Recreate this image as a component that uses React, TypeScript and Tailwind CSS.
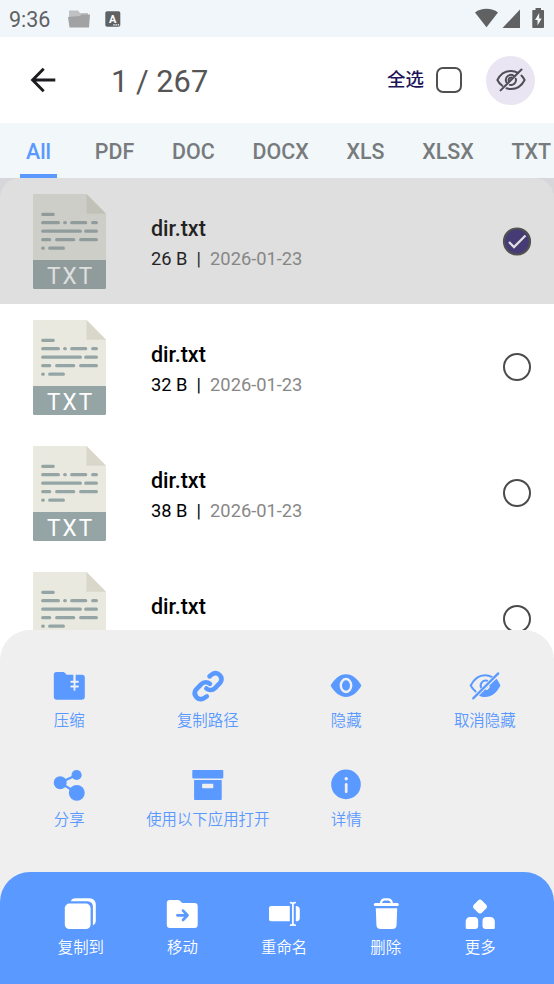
import React from 'react';

interface IconProps {
  className?: string;
}

interface Action {
  label: string;
  icon: React.ReactNode;
}

interface FileEntry {
  name: string;
  size: string;
  date: string;
  selected?: boolean;
}

const tabs = ['All', 'PDF', 'DOC', 'DOCX', 'XLS', 'XLSX', 'TXT'];

const files: FileEntry[] = [
  { name: 'dir.txt', size: '26 B', date: '2026-01-23', selected: true },
  { name: 'dir.txt', size: '32 B', date: '2026-01-23' },
  { name: 'dir.txt', size: '38 B', date: '2026-01-23' },
  { name: 'dir.txt', size: '37 B', date: '2026-01-23' },
];

function Icon({ children }: { children: React.ReactNode }) {
  return (
    <svg className="h-8 w-8 shrink-0 overflow-visible" viewBox="0 0 32 32" fill="currentColor" aria-hidden="true">
      {children}
    </svg>
  );
}

const sheetActions: Action[] = [
  {
    label: '压缩',
    icon: (
      <Icon>
        <path d="M3.6 2H9.5c1.2 0 2 .4 2.8 1.2l1.4 1.6H20.600V13h1.800V4.800H29a2.800 2.800 0 0 1 2.800 2.800v19a3.200 3.200 0 0 1-3.200 3.200H4A3.200 3.200 0 0 1 .8 26.600V4.800A2.800 2.800 0 0 1 3.600 2z" />
        <path d="M21.500 3v17.600" fill="none" stroke="#f0f0f0" strokeWidth="1.800" />
        <path d="M18.300 11.700h6.600M18.300 16.600h6.600" fill="none" stroke="#f0f0f0" strokeWidth="2" strokeLinecap="round" />
      </Icon>
    ),
  },
  {
    label: '复制路径',
    icon: (
      <Icon>
        <g fill="none" stroke="currentColor" strokeWidth="4.600" strokeLinecap="round" strokeLinejoin="round">
          <path d="M17.500 6.300 20.500 4a6 6 0 0 1 8 8.400l-5.500 5.700c-2.500 2.500-6.200 2.300-8.600.3" />
          <path d="M14.800 26.300 11.600 28.400a6 6 0 0 1-7.800-8.600l5.500-5.700c2.500-2.500 6.200-2.300 8.600-.3" />
        </g>
      </Icon>
    ),
  },
  {
    label: '隐藏',
    icon: (
      <Icon>
        <path d="M.6 15.600C4.200 9 9.600 4.200 16 4.200S27.800 9 31.400 15.600C27.800 22.200 22.400 27 16 27S4.200 22.200.6 15.600z" />
        <ellipse cx="16" cy="15.500" rx="5.200" ry="6.500" fill="none" stroke="#f0f0f0" strokeWidth="2.400" />
      </Icon>
    ),
  },
  {
    label: '取消隐藏',
    icon: (
      <Icon>
        <path d="M31.400 15.500C28 22.500 22.400 27 16 27c-2.200 0-4.200-.5-6-1.500L27.400 8.700c1.600 1.700 3 4.400 4 6.800z" />
        <path d="M6.600 21.600C4.700 20 3 17.900 1.700 15.500 5 9 10 5.200 16 5.200c2.600 0 5 .7 7.100 2M12.200 17.800a5 5 0 0 1 6-7" fill="none" stroke="currentColor" strokeWidth="2" strokeLinecap="round" />
        <path d="M16.800 19.400c1.800-.3 3-1.600 3.300-3.500" fill="none" stroke="#f0f0f0" strokeWidth="1.600" />
        <path d="M3.600 27.800 28.700 2.600" fill="none" stroke="#f0f0f0" strokeWidth="1.400" />
        <path d="M4.200 28.400 29.200 3.400" fill="none" stroke="currentColor" strokeWidth="2.200" strokeLinecap="round" />
      </Icon>
    ),
  },
  {
    label: '分享',
    icon: (
      <Icon>
        <path d="M23.500 6 7.100 13.700 23.800 24" fill="none" stroke="currentColor" strokeWidth="2.200" />
        <circle cx="7.200" cy="13.700" r="6.500" />
        <circle cx="23.600" cy="6" r="5.100" />
        <circle cx="23.800" cy="23.900" r="7.900" />
      </Icon>
    ),
  },
  {
    label: '使用以下应用打开',
    icon: (
      <Icon>
        <rect x=".3" y="1" width="31" height="8.400" rx=".8" />
        <path fillRule="evenodd" d="M2.100 11H29.700v19.200a.8.800 0 0 1-.8.800h-26a.8.800 0 0 1-.8-.8zM10.900 14.700a.8.800 0 0 0-.8.800v3a.8.800 0 0 0 .8.800h9.600a.8.800 0 0 0 .8-.8v-3a.8.800 0 0 0-.8-.8z" />
      </Icon>
    ),
  },
  {
    label: '详情',
    icon: (
      <Icon>
        <circle cx="16" cy="15.400" r="14.800" />
        <circle cx="16.200" cy="9.700" r="1.700" fill="#f0f0f0" />
        <path d="M16.200 15.300v7.500" fill="none" stroke="#f0f0f0" strokeWidth="2.700" strokeLinecap="round" />
      </Icon>
    ),
  },
];

const barActions: Action[] = [
  {
    label: '复制到',
    icon: (
      <Icon>
        <g transform="translate(-1.200 0)">
          <rect x="1" y="5.600" width="25.800" height="25.400" rx="4.600" />
          <path d="M7 3.200C7.800 1.200 9.200.2 11.500.2H26a6 6 0 0 1 6 6v16.600c0 2-1 3.800-2.900 4.400V8.400a5.200 5.200 0 0 0-5.200-5.200z" />
        </g>
      </Icon>
    ),
  },
  {
    label: '移动',
    icon: (
      <Icon>
        <g transform="translate(-1 0)">
          <path d="M4 2h7.500c1.200 0 2.200.4 3 1.200l1.300 1.200c.5.4 1 .6 1.600.6H28.500a3.200 3.200 0 0 1 3.200 3.200v18.500a3.200 3.200 0 0 1-3.200 3.200H4a3.200 3.200 0 0 1-3.200-3.200V5.200A3.200 3.200 0 0 1 4 2z" />
          <path d="M11.400 17.300H21M17 12.600l4.500 4.700-4.500 4.700" fill="none" stroke="#5a99ff" strokeWidth="2.700" strokeLinecap="round" strokeLinejoin="round" />
        </g>
      </Icon>
    ),
  },
  {
    label: '重命名',
    icon: (
      <Icon>
        <path d="M3 8h18.800v15.300H3a2 2 0 0 1-2-2V10a2 2 0 0 1 2-2zM27.800 8c2.600 0 4 1.300 4 3.400v8.500c0 2.100-1.400 3.400-4 3.400z" />
        <path d="M22.600 4.600c1.500 0 2.300.6 2.300 1.700 0-1.100.8-1.700 2.300-1.700M22.600 27.200c1.500 0 2.300-.6 2.300-1.700 0 1.100.8 1.700 2.300 1.700M24.900 6v20" fill="none" stroke="currentColor" strokeWidth="1.700" strokeLinecap="round" />
      </Icon>
    ),
  },
  {
    label: '删除',
    icon: (
      <Icon>
        <path d="M10.800 6C11 3 12.600 1.300 15 1.300h2.800c2.400 0 4 1.700 4.200 4.700" fill="none" stroke="currentColor" strokeWidth="2.200" />
        <rect x="3.800" y="4.900" width="25" height="3" rx="1.500" />
        <path d="M5.800 10.200h21.400l-.6 16.500a4.400 4.400 0 0 1-4.400 4.300H10.800a4.400 4.400 0 0 1-4.400-4.300z" />
      </Icon>
    ),
  },
  {
    label: '更多',
    icon: (
      <Icon>
        <rect x="10.300" y="2.900" width="11.400" height="11.400" rx="3" transform="rotate(45 16 8.600)" />
        <path d="M6 19h4.200a4 4 0 0 1 4 4v4.800a3.200 3.200 0 0 1-3.200 3.200H3a1.300 1.300 0 0 1-1.300-1.300v-6.400A4.300 4.300 0 0 1 6 19zM22.500 19h4a4.300 4.300 0 0 1 4.300 4.300v6.400a1.300 1.300 0 0 1-1.300 1.300h-7.800a3.200 3.200 0 0 1-3.200-3.200V23a4 4 0 0 1 4-4z" />
      </Icon>
    ),
  },
];

function TxtFileIcon({ className }: IconProps) {
  return (
    <svg className={className} viewBox="0 0 73 95" aria-hidden="true">
      <path d="M1 0h52.500L73 19.800V66H0V1a1 1 0 0 1 1-1z" fill="#e9e9e0" />
      <path d="M53.500 0 73 19.800H53.500z" fill="#d8d7ca" />
      <path d="M0 66h73v27.500a1.500 1.500 0 0 1-1.500 1.500h-70A1.500 1.500 0 0 1 0 93.500z" fill="#95a5a5" />
      <path
        d="M9.700 20.300h10.600M9.700 28.700h15.700M31.700 28.700h.6M38.700 28.700h14M59.700 28.700h3.700M9.700 37.200h37.700M52.700 37.200h10.700M9.700 45.700h7M23.700 45.700h17M47.700 45.700h15.700M9.700 54.200h.6M16.700 54.200h13.700"
        fill="none"
        stroke="#95a5a5"
        strokeWidth="3.200"
        strokeLinecap="round"
      />
      <text
        x="41"
        y="90"
        textAnchor="middle"
        fontSize="24.500"
        letterSpacing="2.300"
        transform="scale(.92 1)"
        fill="#fff"
        className="font-['Roboto',sans-serif]"
      >
        TXT
      </text>
    </svg>
  );
}

function StatusBar() {
  return (
    <div className="flex h-[37px] shrink-0 items-center bg-[#f1f6fa] pl-[9px] pr-[9px] text-[#5f6163]">
      <span className="mt-[2px] text-[21.500px] leading-none">9:36</span>
      <svg className="ml-[18px] h-[18px] w-[22px]" viewBox="0 0 22 18" aria-hidden="true">
        <path d="M1 .5h9l2 2.500h8v8H1z" fill="#bfc1c3" />
        <path d="M0 7 12 6l1.500-1.500H22L21 17.500H1.500z" fill="#a0a2a4" />
      </svg>
      <svg className="ml-[15px] h-4 w-4" viewBox="0 0 16 16" aria-hidden="true">
        <rect x=".3" y=".2" width="15" height="15.600" rx="1.800" fill="#5f6163" />
        <text x="7.700" y="11.600" textAnchor="middle" fontSize="11" fontWeight="700" fill="#fff" className="font-['Roboto',sans-serif]">
          A
        </text>
        <path d="M8.300 13.900h1.400M10.500 13.900h1.400M12.700 13.900h1.400" stroke="#fff" strokeWidth="1.200" />
      </svg>
      <svg className="mb-px ml-auto h-[20px] w-[70px]" viewBox="475 8 70 20" fill="currentColor" aria-hidden="true">
        <path d="M486.500 27.200 475 12.400c3.200-2.300 7.200-3.600 11.500-3.600s8.300 1.300 11.500 3.600z" />
        <path d="M520 9.500V28h-17.500z" />
        <path fillRule="evenodd" d="M535.500 8h5.500v2h2.200c.5 0 .8.300.8.800v16.400c0 .5-.3.800-.8.800h-10.100a.8.800 0 0 1-.8-.8V10.800c0-.5.300-.8.800-.8h2.400zM539.200 13l-4.200 7h2.500v5.500l4.200-7h-2.500z" />
      </svg>
    </div>
  );
}

function Header() {
  return (
    <header className="flex h-[86px] shrink-0 items-center bg-white pl-[30px] pr-[19px]">
      <svg className="h-[26px] w-[26px]" viewBox="0 0 26 26" fill="none" stroke="#1c1b1f" strokeWidth="2.900" aria-hidden="true">
        <path d="M25.300 13H3M13.700 1.700 2.600 13l11.100 11.300" />
      </svg>
      <h1 className="ml-[55px] mt-[4px] text-[30.800px] leading-none text-[#555]">1 / 267</h1>
      <span className="ml-auto mt-px text-[18.500px] font-medium leading-none text-[#1d1358]">全选</span>
      <span className="ml-[12px] h-[26px] w-[26px] rounded-[7px] border-[2.500px] border-[#505050]" />
      <button className="ml-[24px] flex h-[49px] w-[49px] items-center justify-center rounded-full bg-[#e9e5f3]">
        <svg className="h-6 w-[30px]" viewBox="0 0 30 24" fill="none" stroke="#514d57" strokeWidth="2" strokeLinecap="round" aria-hidden="true">
          <path d="M6.300 17.800C4.200 16.300 2.500 14.300 1.400 12 4.200 6.400 9 3 15 3c2.600 0 5 .7 7 1.800M25.400 7.600c1.300 1.200 2.400 2.700 3.200 4.400C25.800 17.600 21 21 15 21c-1.600 0-3-.2-4.400-.7" />
          <path d="M10.300 14a5 5 0 0 1 7.600-6M19.800 10.800a5 5 0 0 1-6 6.100M12.700 12.800a2.500 2.500 0 0 1 2.700-3.200" />
          <path d="M4.600 22.400 25.500 1.500" />
        </svg>
      </button>
    </header>
  );
}

function Tabs() {
  return (
    <nav className="flex h-[55px] shrink-0 gap-[37.800px] overflow-hidden bg-[#f2f7fa] pl-5 text-[21.400px] font-medium">
      {tabs.map((tab, i) => (
        <div
          key={tab}
          className={
            i === 0
              ? 'flex w-[37px] shrink-0 items-center justify-center border-b-4 border-[#5a99ff] pt-[7px] text-[#5a99ff]'
              : 'flex shrink-0 items-center border-b-4 border-transparent pt-[7px] text-[#777b7d]'
          }
        >
          {tab}
        </div>
      ))}
    </nav>
  );
}

function FileRow({ file }: { file: FileEntry }) {
  return (
    <li className="relative flex h-[126px] shrink-0 items-center pl-[33px] pr-[22px]">
      <TxtFileIcon className="h-[95px] w-[73px]" />
      <div className="ml-[45px] mt-[5px] flex-1">
        <p className="text-[21.500px] font-medium leading-[30px] text-black">{file.name}</p>
        <p className="whitespace-pre text-[18.300px] leading-[30px] text-black">
          {file.size}
          {'  |  '}
          <span className="text-[#888]">{file.date}</span>
        </p>
      </div>
      {file.selected ? (
        <svg className="h-[30px] w-[30px]" viewBox="0 0 30 30" fill="none" aria-hidden="true">
          <circle cx="15" cy="15.500" r="13" fill="#31236f" stroke="#404040" strokeWidth="2.200" />
          <path d="m7 16 5 5L23.500 9.500" stroke="#fff" strokeWidth="2.300" />
        </svg>
      ) : (
        <span className="mr-px h-7 w-7 rounded-full border-2 border-[#4b4b4b]" />
      )}
      {/* dims the whole row while it is selected */}
      {file.selected && <span className="absolute inset-0 bg-[#838383]/26" />}
    </li>
  );
}

function ActionSheet() {
  return (
    <section className="absolute inset-x-0 bottom-0 h-[354px] rounded-t-[30px] bg-[#efefef]">
      <div className="flex h-full flex-col">
        <div className="grid flex-1 auto-rows-[99.500px] grid-cols-4 pt-[39.500px] text-[#5a99ff]">
          {sheetActions.map((action) => (
            <button key={action.label} className="flex flex-col items-center">
              {action.icon}
              <span className="mt-[9px] whitespace-nowrap text-[15.400px] font-[350] leading-5">{action.label}</span>
            </button>
          ))}
        </div>
        <div className="flex h-28 shrink-0 justify-center gap-[62.500px] rounded-t-[30px] bg-[#5a99ff] pt-[26px] text-white">
          {barActions.map((action) => (
            <button key={action.label} className="flex flex-col items-center">
              {action.icon}
              <span className="mt-[8px] text-[15.400px] font-[350] leading-5">{action.label}</span>
            </button>
          ))}
        </div>
      </div>
    </section>
  );
}

export default function App() {
  return (
    <div className="relative flex h-[984px] w-[554px] flex-col overflow-hidden bg-white font-['Roboto','Noto_Sans_CJK_SC',sans-serif]">
      <StatusBar />
      <Header />
      <Tabs />
      <main className="flex-1 overflow-hidden bg-[#f3f3fa]">
        <ul className="flex flex-col rounded-t-[20px] bg-white">
          {files.map((file, i) => (
            <FileRow key={i} file={file} />
          ))}
        </ul>
      </main>
      <ActionSheet />
    </div>
  );
}
